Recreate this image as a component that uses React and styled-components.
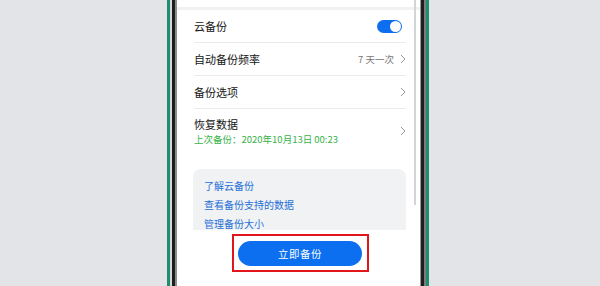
import React from "react"
import styled, { createGlobalStyle } from "styled-components"

const GlobalStyle = createGlobalStyle`
  html, body {
    margin: 0;
    padding: 0;
    background: #e2e4e7;
    font-family: "Noto Sans CJK SC", "Noto Sans", sans-serif;
  }
`

const Page = styled.div`
  display: flex;
  justify-content: center;
  height: 286px;
  overflow: hidden;
  padding-right: 4px;
`

// phone frame, layered borders from outside in
const FrameGreen = styled.div`
  border-left: 3px solid #1f8e6f;
  border-right: 3px solid #1f8e6f;
  background: #d4d8d8;
`
const FrameLight = styled.div`
  border-left: 2px solid #d3d7d7;
  border-right: 2px solid #7c7c7c;
`
const FrameBlack = styled.div`
  border-left: 3px solid #1e1e1e;
  border-right: 3px solid #1e1e1e;
`
const FrameInner = styled.div`
  border-left: 2px solid #8c8c8c;
  border-right: 1px solid #9a9a9a;
`

const Screen = styled.div`
  width: 243px;
  height: 286px;
  background: #ffffff;
  display: flex;
  flex-direction: column;
`

const ScrollArea = styled.div`
  position: relative;
  height: 230px;
  overflow: hidden;
  flex-shrink: 0;
`

const ScrollThumb = styled.div`
  position: absolute;
  right: 4px;
  top: 0;
  width: 2px;
  height: 205px;
  background: #d6d3d6;
`

const TopGap = styled.div`
  height: 7px;
  border-bottom: 3px solid #f0f1f2;
`

const List = styled.div`
  padding: 0 14px 0 17px;
`

const Row = styled.div`
  display: flex;
  align-items: center;
  justify-content: space-between;
  min-height: 32px;
  border-bottom: ${p => (p.$last ? "none" : "1px solid #ebebeb")};
  padding: ${p => (p.$last ? "6px 0 6px" : "0")};
`

const RowText = styled.div`
  display: flex;
  flex-direction: column;
`

const Title = styled.div`
  font-size: 11px;
  line-height: 16px;
  color: #161616;
`

const Sub = styled.div`
  font-size: 9.5px;
  line-height: 14px;
  color: #34b347;
`

const RowRight = styled.div`
  display: flex;
  align-items: center;
  gap: 6px;
`

const Value = styled.span`
  font-size: 9.5px;
  color: #777777;
`

const Toggle = styled.div`
  width: 25px;
  height: 13px;
  border-radius: 7px;
  background: #0d6ff0;
  margin-right: 4px;
  display: flex;
  align-items: center;
  justify-content: flex-end;
  padding: 0 1px;
  box-sizing: border-box;
`

const Knob = styled.div`
  width: 11px;
  height: 11px;
  border-radius: 50%;
  background: #ffffff;
`

const Card = styled.div`
  margin: 16px 14px 0 16px;
  background: #f1f2f4;
  border-radius: 8px;
  padding: 7px 11px 20px;
`

const LinkText = styled.div`
  font-size: 10px;
  line-height: 19px;
  color: #1f6fd6;
`

const BottomBar = styled.div`
  display: flex;
  justify-content: center;
  padding: 4px 0 0 4px;
`

const Highlight = styled.div`
  border: 2px solid #e2141c;
  padding: 5px 5px 4px 4px;
  box-sizing: border-box;
  width: 137px;
`

const Button = styled.div`
  height: 25px;
  border-radius: 13px;
  background: #0b6fef;
  color: #ffffff;
  font-size: 10.5px;
  letter-spacing: 0.5px;
  display: flex;
  align-items: center;
  justify-content: center;
`

const Chevron = () => (
  <svg width="6" height="10" viewBox="0 0 6 10">
    <polyline points="1,1 5,5 1,9" fill="none" stroke="#9a9a9a" strokeWidth="1" />
  </svg>
)

export default function App() {
  return (
    <>
      <GlobalStyle />
      <Page>
        <FrameGreen>
          <FrameLight>
            <FrameBlack>
              <FrameInner>
                <Screen>
                  <ScrollArea>
                    <TopGap />
                    <List>
                      <Row>
                        <Title>云备份</Title>
                        <Toggle><Knob /></Toggle>
                      </Row>
                      <Row>
                        <Title>自动备份频率</Title>
                        <RowRight>
                          <Value>7 天一次</Value>
                          <Chevron />
                        </RowRight>
                      </Row>
                      <Row>
                        <Title>备份选项</Title>
                        <Chevron />
                      </Row>
                      <Row $last>
                        <RowText>
                          <Title>恢复数据</Title>
                          <Sub>上次备份：2020年10月13日 00:23</Sub>
                        </RowText>
                        <Chevron />
                      </Row>
                    </List>
                    <Card>
                      <LinkText>了解云备份</LinkText>
                      <LinkText>查看备份支持的数据</LinkText>
                      <LinkText>管理备份大小</LinkText>
                    </Card>
                    <ScrollThumb />
                  </ScrollArea>
                  <BottomBar>
                    <Highlight>
                      <Button>立即备份</Button>
                    </Highlight>
                  </BottomBar>
                </Screen>
              </FrameInner>
            </FrameBlack>
          </FrameLight>
        </FrameGreen>
      </Page>
    </>
  )
}
